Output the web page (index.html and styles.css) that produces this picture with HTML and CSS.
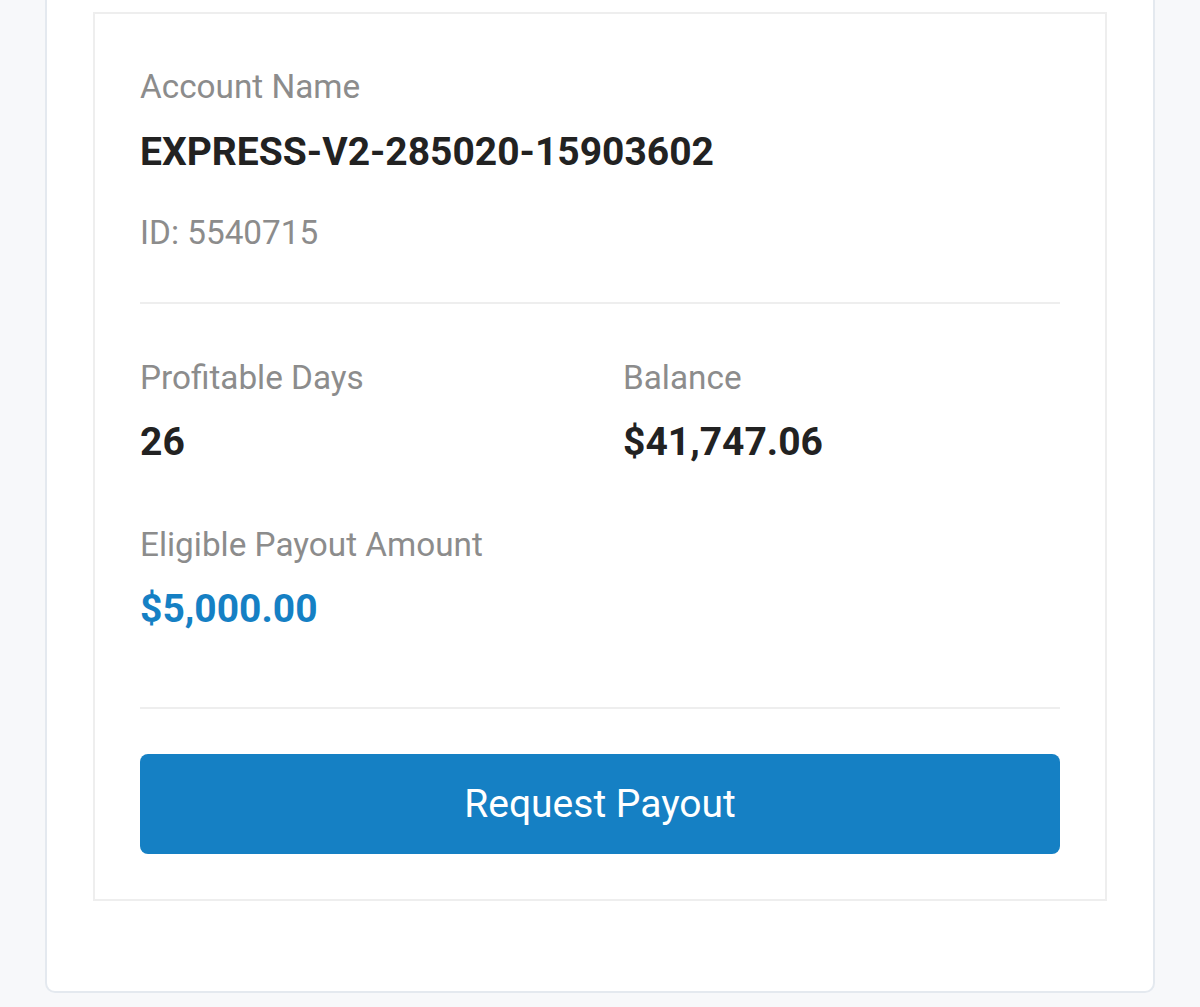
FILE: index.html
```html
<!DOCTYPE html>
<html lang="en">
<head>
    <meta charset="UTF-8">
    <meta name="viewport" content="width=device-width, initial-scale=1.0">
    <title>Payout</title>
    <link rel="stylesheet" href="styles.css">
</head>
<body>
    <div class="page">
        <div class="panel">
            <div class="account-card">
                <div class="label">Account Name</div>
                <div class="account-name">EXPRESS-V2-285020-15903602</div>
                <div class="account-id">ID: 5540715</div>

                <div class="divider first"></div>

                <div class="stats">
                    <div class="stat">
                        <div class="label">Profitable Days</div>
                        <div class="value">26</div>
                    </div>
                    <div class="stat">
                        <div class="label">Balance</div>
                        <div class="value">$41,747.06</div>
                    </div>
                    <div class="stat">
                        <div class="label">Eligible Payout Amount</div>
                        <div class="value payout">$5,000.00</div>
                    </div>
                </div>

                <div class="divider second"></div>

                <button class="payout-btn">Request Payout</button>
            </div>
        </div>
    </div>
</body>
</html>
```

FILE: styles.css
```css
body {
    font-family: Roboto, "Noto Sans", Arial, sans-serif;
    background-color: #f7f8fa;
    margin: 0;
    height: 100vh;
    overflow: hidden;
}
.page {
    padding: 0 45px 14px;
}
.panel {
    background-color: #fff;
    border: 2px solid #e4e9ef;
    border-top: none;
    border-radius: 0 0 10px 10px;
    padding: 12px 46px 90px;
}
.account-card {
    border: 2px solid #eeeeee;
    padding: 53px 45px 45px;
}
.label {
    font-size: 33.3px;
    line-height: 40px;
    color: #8c8c8c;
}
.account-name {
    margin-top: 22px;
    font-size: 39px;
    line-height: 47px;
    font-weight: 700;
    color: #222;
}
.account-id {
    margin-top: 37px;
    font-size: 33.3px;
    line-height: 40px;
    color: #8c8c8c;
}
.divider {
    height: 2px;
    background-color: #eeeeee;
}
.divider.first {
    margin: 49px 0 54px;
}
.divider.second {
    margin: 74px 0 45px;
}
.stats {
    display: grid;
    grid-template-columns: 1fr 1fr;
    column-gap: 46px;
    row-gap: 59px;
}
.stat .value {
    margin-top: 21px;
    font-size: 39px;
    line-height: 47px;
    font-weight: 700;
    color: #222;
}
.stat .value.payout {
    color: #1580c4;
}
.payout-btn {
    display: block;
    width: 100%;
    height: 100px;
    border: none;
    border-radius: 8px;
    background-color: #1580c4;
    color: #fff;
    font-family: inherit;
    font-size: 39px;
    cursor: pointer;
}
.payout-btn:hover {
    background-color: #126fab;
}
```
